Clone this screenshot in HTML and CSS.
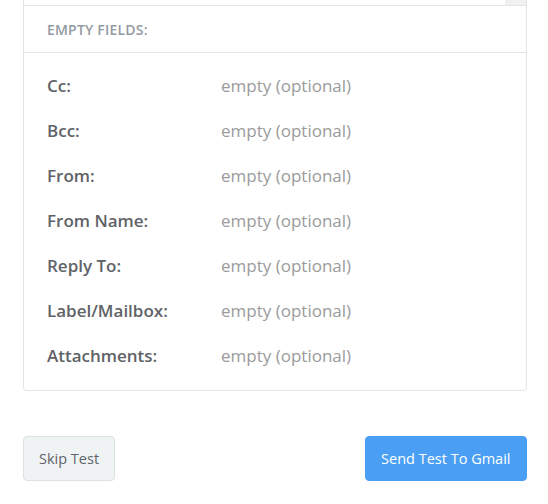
FILE: index.html
```html
<!DOCTYPE html>
<html>
<head>
<meta charset="utf-8">
<link rel="stylesheet" href="styles.css">
</head>
<body>
<div class="page">
  <div class="card">
    <div class="prev"><div class="prev-scroll"></div></div>
    <div class="card-head">EMPTY FIELDS:</div>
    <div class="card-body">
      <div class="row"><div class="label">Cc:</div><div class="value">empty (optional)</div></div>
      <div class="row"><div class="label">Bcc:</div><div class="value">empty (optional)</div></div>
      <div class="row"><div class="label">From:</div><div class="value">empty (optional)</div></div>
      <div class="row"><div class="label">From Name:</div><div class="value">empty (optional)</div></div>
      <div class="row"><div class="label">Reply To:</div><div class="value">empty (optional)</div></div>
      <div class="row"><div class="label">Label/Mailbox:</div><div class="value">empty (optional)</div></div>
      <div class="row"><div class="label">Attachments:</div><div class="value">empty (optional)</div></div>
    </div>
  </div>
  <div class="actions">
    <button class="btn btn-skip">Skip Test</button>
    <button class="btn btn-send">Send Test To Gmail</button>
  </div>
</div>
</body>
</html>
```
FILE: styles.css
```css
html, body {
  margin: 0;
  padding: 0;
  background: #ffffff;
}
body {
  font-family: "Open Sans", "Noto Sans", sans-serif;
}
.page {
  width: 504px;
  padding-left: 23px;
}
.card {
  border: 1px solid #e3e5e8;
  border-top: none;
  border-radius: 0 0 4px 4px;
  background: #fff;
}
.prev {
  height: 5px;
  border-bottom: 1px solid #e3e5e8;
  display: flex;
  justify-content: flex-end;
}
.prev-scroll {
  width: 21px;
  height: 5px;
  background: #f1f1f1;
}
.card-head {
  height: 46px;
  display: flex;
  align-items: center;
  padding: 0 23px;
  border-bottom: 1px solid #e3e5e8;
  font-size: 14px;
  font-weight: 600;
  letter-spacing: 0.2px;
  color: #939aa1;
}
.card-body {
  padding: 10px 23px 12px;
}
.row {
  height: 45px;
  display: flex;
  align-items: center;
}
.label {
  width: 174px;
  font-size: 17px;
  font-weight: 600;
  color: #5f6367;
}
.value {
  font-size: 17px;
  color: #9b9b9b;
}
.actions {
  display: flex;
  justify-content: space-between;
  margin-top: 45px;
}
.btn {
  height: 45px;
  padding: 0 15px;
  border-radius: 4px;
  font-family: "Open Sans", "Noto Sans", sans-serif;
  font-size: 14.5px;
  cursor: pointer;
}
.btn-skip {
  background: #f0f3f4;
  border: 1px solid #dde1e4;
  color: #5f6468;
}
.btn-send {
  background: #4a9ff5;
  border: 1px solid #4a9ff5;
  color: #ffffff;
  padding: 0 15.5px;
}
```
